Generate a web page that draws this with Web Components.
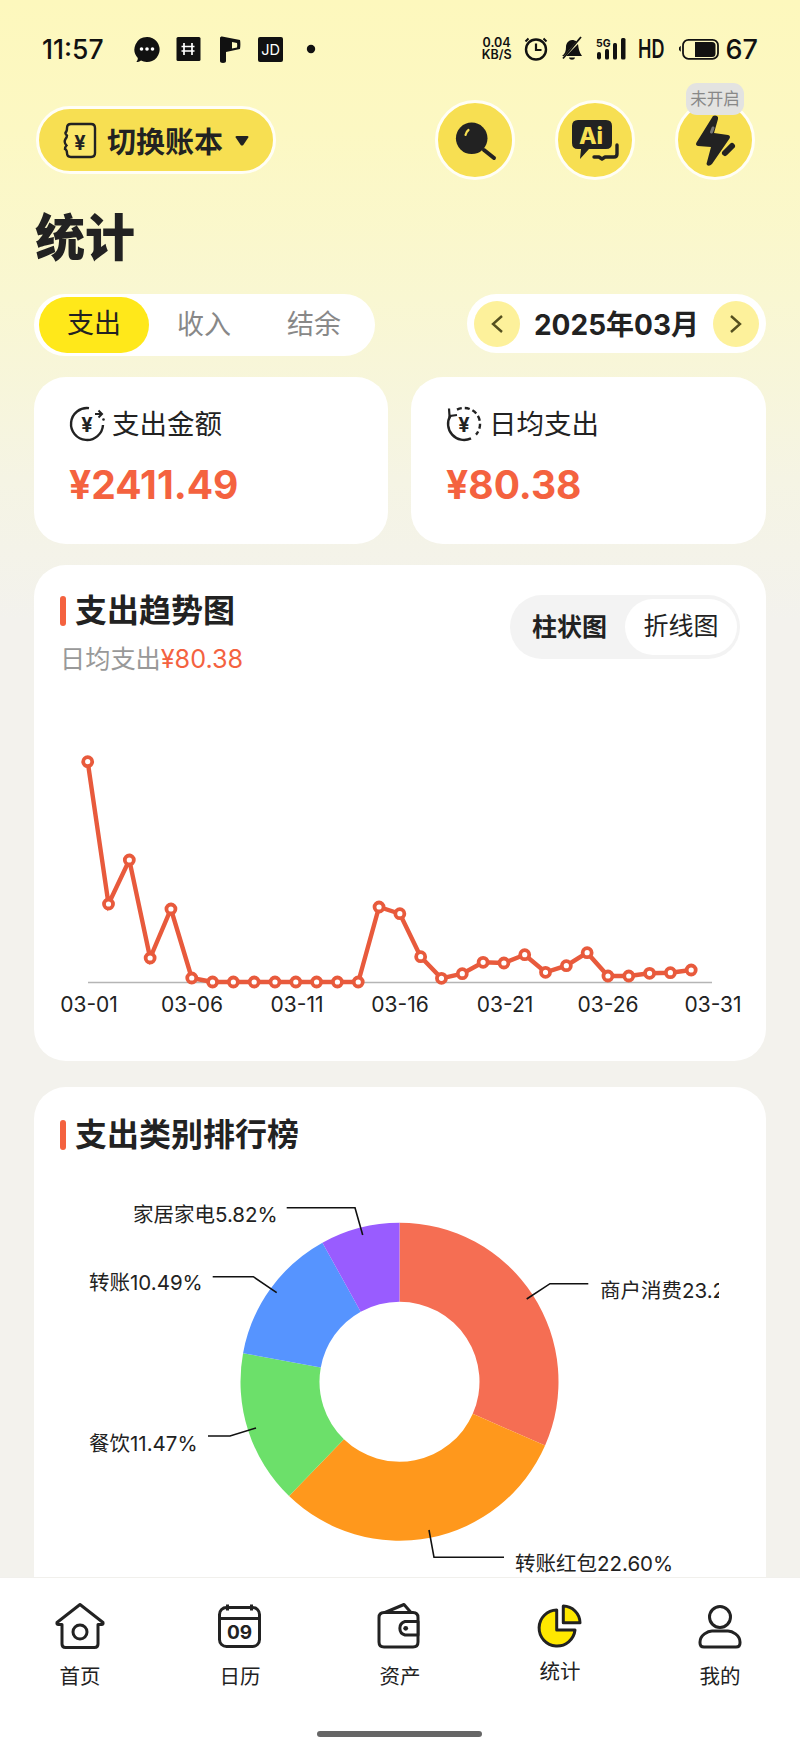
<!DOCTYPE html>
<html lang="zh">
<head>
<meta charset="utf-8">
<title>统计</title>
<style>
  html, body { margin: 0; padding: 0; }
  body {
    width: 800px;
    height: 1759px;
    overflow: hidden;
    font-family: Inter, "Noto Sans CJK SC", sans-serif;
    color: #222;
  }
</style>
</head>
<body>
<app-shell>
  <status-bar></status-bar>
  <top-actions></top-actions>
  <page-title>统计</page-title>
  <filter-row></filter-row>
  <stat-row>
    <stat-card icon="out" label="支出金额" value="¥2411.49"></stat-card>
    <stat-card icon="avg" label="日均支出" value="¥80.38"></stat-card>
  </stat-row>
  <trend-card></trend-card>
  <rank-card></rank-card>
  <tab-bar slot="nav"></tab-bar>
</app-shell>

<script>
const FONT = 'Inter, "Noto Sans CJK SC", sans-serif';

class AppShell extends HTMLElement {
    connectedCallback() {
        let shadow = this.attachShadow({ mode: 'open' });
        shadow.innerHTML = `
            <style>
                :host {
                    display: flex;
                    flex-direction: column;
                    width: 800px;
                    height: 1759px;
                    background: #f3f2ed;
                }
                .scroll {
                    flex: 1;
                    min-height: 0;
                    overflow: hidden;
                    background: linear-gradient(180deg, #fdf8bd 0, #fcf8c3 130px, #f9f7d2 300px, #f5f4e4 480px, #f3f2ed 620px);
                }
            </style>
            <div class="scroll"><slot></slot></div>
            <slot name="nav"></slot>
        `;
    }
}

class StatusBar extends HTMLElement {
    connectedCallback() {
        let shadow = this.attachShadow({ mode: 'open' });
        shadow.innerHTML = `
            <style>
                :host {
                    display: flex;
                    align-items: center;
                    height: 100px;
                    padding: 0 42px 2px 42px;
                    box-sizing: border-box;
                    color: #111;
                    font-family: ${FONT};
                }
                .time { font-size: 26.5px; font-weight: 500; width: 92px; }
                .num { font-size: 27px; font-weight: 500; margin-left: 6px; }
                svg { display: block; flex: none; }
                .speed { font-size: 12.5px; line-height: 12px; font-weight: 600; text-align: center; margin-left: auto; }
                .hd { font-size: 25px; font-weight: 600; transform: scaleX(.72); transform-origin: left; width: 28px; margin-left: 10px; margin-right: 12px; letter-spacing: 0; }
            </style>
            <span class="time">11:57</span>
            <svg width="190" height="30" viewBox="134 34 190 30">
                <path d="M147 37a12.5 12.5 0 1 1-6 23.4c-1.5 1.2-3 1.6-4.6 1.6 1-1.200 1.500-2.500 1.400-4A12.500 12.500 0 0 1 147 37z" fill="#111"/>
                <circle cx="141.500" cy="49" r="1.800" fill="#fff"/><circle cx="147" cy="49" r="1.800" fill="#fff"/><circle cx="152.500" cy="49" r="1.800" fill="#fff"/>
                <rect x="176.500" y="37" width="24" height="24" rx="1.500" fill="#111"/>
                <path d="M184 43v12M192 43v12M181.500 46.500h13M181.500 51h13" stroke="#fff" stroke-width="1.700" fill="none"/>
                <path d="M220 38c0-1 1-1.500 2-1.500l18 3.500c.5 2 .6 6 0 9l-14 3v9c0 1-1 2-3 2s-3-1-3-2z" fill="#111"/>
                <path d="M232 42l5 1c.3 1.500.3 3 0 4.500l-5 1z" fill="#fdf8c0"/>
                <rect x="258" y="37" width="25" height="25" rx="2" fill="#111"/>
                <text x="270.500" y="55" font-size="14.500" fill="#fff" text-anchor="middle" font-family="Inter, sans-serif">JD</text>
                <circle cx="311" cy="49" r="4.200" fill="#111"/>
            </svg>
            <span class="speed">0.04<br>KB/S</span>
            <svg style="margin-left:12px" width="24" height="26" viewBox="526 36 24 26">
                <circle cx="538" cy="49.500" r="10" fill="none" stroke="#111" stroke-width="2.400"/>
                <path d="M538 43.500v6.500h5.500" fill="none" stroke="#111" stroke-width="2.200"/>
                <path d="M527.500 41.500l3-3M548.500 41.500l-3-3" stroke="#111" stroke-width="2"/>
            </svg>
            <svg style="margin-left:13px" width="22" height="26" viewBox="563 36 22 26">
                <path d="M564 56c3-2 4-5 4-9 0-4 3-7 6-7 2 0 3 .5 4.500 1.500L566 56zM580 44c.5 4 1 8 4 12h-16z" fill="#111"/>
                <path d="M571 57.500c.5 3 5.500 3 6 0z" fill="#111"/>
                <path d="M565 58.500L583 37" stroke="#111" stroke-width="1.800"/>
            </svg>
            <svg style="margin-left:13px" width="32" height="24" viewBox="598 37 32 24">
                <text x="598" y="46.500" font-size="10.500" font-weight="700" fill="#111" font-family="Inter, sans-serif">5G</text>
                <rect x="599" y="52" width="4" height="7.500" rx="2" fill="#111"/>
                <rect x="607" y="49" width="4" height="10.500" rx="1.500" fill="#111"/>
                <rect x="615" y="43" width="4" height="16.500" rx="1.500" fill="#111"/>
                <rect x="623" y="38" width="4.500" height="21.500" rx="1.500" fill="#111"/>
            </svg>
            <span class="hd">HD</span>
            <svg width="42" height="24" viewBox="679 37 42 24">
                <rect x="684" y="39.800" width="35" height="19" rx="5.500" fill="none" stroke="#111" stroke-width="1.800"/>
                <path d="M696 42h17q3.500 0 3.500 3.500v8q0 3.500-3.500 3.500h-17z" fill="#111"/>
                <path d="M680 47.500l1.800-1.800v6l-1.800-1.800z" fill="#111"/>
            </svg>
            <span class="num">67</span>
        `;
    }
}

class TopActions extends HTMLElement {
    connectedCallback() {
        let shadow = this.attachShadow({ mode: 'open' });
        shadow.innerHTML = `
            <style>
                :host {
                    display: flex;
                    align-items: center;
                    height: 80px;
                    padding: 0 45px 0 36px;
                    font-family: ${FONT};
                    color: #222;
                }
                .switch {
                    display: flex;
                    align-items: center;
                    box-sizing: border-box;
                    width: 240px;
                    height: 68px;
                    padding-left: 22px;
                    border: 3px solid #fffef6;
                    border-radius: 34px;
                    background: #f7df52;
                    font-size: 29px;
                    font-weight: 700;
                    margin-right: auto;
                }
                .switch svg { margin-right: 10px; }
                .switch .caret { margin: 2px 0 0 12px; }
                .round {
                    position: relative;
                    box-sizing: border-box;
                    width: 80px;
                    height: 80px;
                    margin-left: 40px;
                    border: 3px solid #fffef6;
                    border-radius: 50%;
                    background: #f7df52;
                }
                .round svg { position: absolute; left: -3px; top: -3px; }
                .badge {
                    position: absolute;
                    left: 8px;
                    top: -20px;
                    width: 58px;
                    height: 32px;
                    border-radius: 11px;
                    background: #e3e3e1;
                    color: #888;
                    font-size: 16.500px;
                    line-height: 32px;
                    text-align: center;
                }
            </style>
            <div class="switch">
                <svg width="36" height="38" viewBox="61 121 36 38">
                    <path d="M71 124h20q4 0 4 4v25q0 4-4 4H71q-4 0-4-4 0-3-2-4 0-2 1.500-3.500-3-3.500-1-6.500 1.500-2 1.500-3.500-2-2-1.500-3 1.500-1 1.500-4.500 0-4 4-4z" fill="#fbe76a" stroke="#222" stroke-width="2.400"/>
                    <text x="80" y="150" font-size="20" font-weight="700" fill="#222" text-anchor="middle" font-family="Inter, sans-serif">¥</text>
                </svg>
                切换账本
                <svg class="caret" width="14" height="10" viewBox="0 0 14 10"><path d="M1.500 0h11q1.500 0 .8 1.500l-5 7.500q-1.300 1-2.600 0l-5-7.500Q0 0 1.500 0z" fill="#222"/></svg>
            </div>
            <div class="round">
                <svg width="80" height="80" viewBox="435 100 80 80">
                    <path d="M484 150l10 8" stroke="#222" stroke-width="4" stroke-linecap="round"/>
                    <circle cx="471.700" cy="138.300" r="15.800" fill="#222"/>
                    <path d="M465.500 135q.8-3.500 3-5" stroke="#f7df52" stroke-width="2.200" stroke-linecap="round" fill="none"/>
                </svg>
            </div>
            <div class="round">
                <svg width="80" height="80" viewBox="555 100 80 80">
                    <path d="M578 120h28q6 0 6 6v17q0 6-6 6h-17l-9 10 1-10h-3q-6 0-6-6v-17q0-6 6-6z" fill="#222"/>
                    <text x="591" y="144" font-size="23" font-weight="800" fill="#f7df52" text-anchor="middle" font-family="Inter, sans-serif">Ai</text>
                    <path d="M617 145v9q0 3-3 3h-9l-3 2-3-2h-5" fill="none" stroke="#222" stroke-width="3.400" stroke-linecap="round" stroke-linejoin="round"/>
                </svg>
            </div>
            <div class="round">
                <svg width="80" height="80" viewBox="675 100 80 80">
                    <path d="M713 116q2-1 4 0 1.500 1 1 3l-4 14 14 2q3 1 1.500 3.500L712 164q-3 3-5 1-1-1 0-3l4-15-13-1q-3-1-1.500-3.500z" fill="#222"/>
                    <path d="M711.500 132l1.500-4" stroke="#777" stroke-width="3" stroke-linecap="round"/>
                    <path d="M725 153l7-7" stroke="#222" stroke-width="6" stroke-linecap="round"/>
                </svg>
                <span class="badge">未开启</span>
            </div>
        `;
    }
}

class PageTitle extends HTMLElement {
    connectedCallback() {
        let shadow = this.attachShadow({ mode: 'open' });
        shadow.innerHTML = `
            <style>
                :host {
                    display: block;
                    margin: 33px 34px 0 35px;
                    height: 50px;
                    line-height: 50px;
                    font-size: 50px;
                    font-weight: 900;
                    font-family: ${FONT};
                    color: #222;
                }
            </style>
            <slot></slot>
        `;
    }
}

class FilterRow extends HTMLElement {
    connectedCallback() {
        let shadow = this.attachShadow({ mode: 'open' });
        shadow.innerHTML = `
            <style>
                :host {
                    display: flex;
                    justify-content: space-between;
                    margin: 31px 34px 0;
                    height: 62px;
                    font-family: ${FONT};
                }
                .tabs {
                    display: grid;
                    grid-template-columns: 110px 110px 110px;
                    align-items: center;
                    box-sizing: border-box;
                    width: 341px;
                    height: 62px;
                    padding: 3px 5px;
                    border-radius: 31px;
                    background: #fff;
                    font-size: 27px;
                    line-height: 54px;
                    color: #888;
                    text-align: center;
                }
                .tabs .on {
                    height: 56px;
                    border-radius: 28px;
                    background: #ffe81a;
                    color: #222;
                }
                .month {
                    display: flex;
                    align-items: center;
                    justify-content: space-between;
                    box-sizing: border-box;
                    width: 299px;
                    height: 59px;
                    padding: 0 7px;
                    border-radius: 30px;
                    background: #fff;
                    font-size: 28px;
                    font-weight: 700;
                    color: #222;
                }
                .month span:nth-child(2) { margin-top: -2px; }
                .arrow {
                    display: flex;
                    align-items: center;
                    justify-content: center;
                    width: 46px;
                    height: 46px;
                    border-radius: 50%;
                    background: #fdf19b;
                }
            </style>
            <div class="tabs"><span class="on">支出</span><span>收入</span><span>结余</span></div>
            <div class="month">
                <span class="arrow"><svg width="14" height="20" viewBox="0 0 14 20"><path d="M12 2L3 10l9 8" fill="none" stroke="#55501f" stroke-width="2.400"/></svg></span>
                <span>2025年03月</span>
                <span class="arrow"><svg width="14" height="20" viewBox="0 0 14 20"><path d="M2 2l9 8-9 8" fill="none" stroke="#55501f" stroke-width="2.400"/></svg></span>
            </div>
        `;
    }
}

class StatRow extends HTMLElement {
    connectedCallback() {
        let shadow = this.attachShadow({ mode: 'open' });
        shadow.innerHTML = `
            <style>
                :host {
                    display: grid;
                    grid-template-columns: 354px 355px;
                    gap: 23px;
                    margin: 21px 34px 0;
                }
            </style>
            <slot></slot>
        `;
    }
}

class StatCard extends HTMLElement {
    connectedCallback() {
        let shadow = this.attachShadow({ mode: 'open' });
        // las dos monedas solo cambian en el arco y la flecha
        let out = `
            <path d="M89 408.100A16 16 0 1 0 103 425" fill="none" stroke="#222" stroke-width="2.400"/>
            <path d="M95 414H102M98.500 410.500L102 414L98.500 417.500" fill="none" stroke="#222" stroke-width="2"/>
            <circle cx="103.500" cy="419.500" r="1.300" fill="#222"/>`;
        let avg = `
            <path d="M73.500 415.500A16 16 0 0 0 94 438.400" fill="none" stroke="#222" stroke-width="2.400"/>
            <path d="M80 409.600A16 16 0 0 1 99 434.600" fill="none" stroke="#222" stroke-width="2.400" stroke-dasharray="5 3"/>
            <path d="M72 408.500L72.500 416L80 415" fill="none" stroke="#222" stroke-width="2.200"/>`;
        shadow.innerHTML = `
            <style>
                :host {
                    display: block;
                    box-sizing: border-box;
                    height: 167px;
                    padding: 28px 0 0 35px;
                    border-radius: 32px;
                    background: #fff;
                    font-family: ${FONT};
                }
                .label { display: flex; align-items: center; height: 38px; font-size: 27.500px; color: #222; }
                .label svg { margin-right: 7px; }
                .label span { margin-top: -4px; }
                .value { margin-top: 18px; line-height: 48px; font-size: 39px; font-weight: 700; color: #f4623f; }
            </style>
            <div class="label">
                <svg width="36" height="38" viewBox="69 405 36 38">
                    ${this.getAttribute('icon') === 'out' ? out : avg}
                    <text x="87" y="431.500" font-size="20" font-weight="700" fill="#222" text-anchor="middle" font-family="Inter, sans-serif">¥</text>
                </svg>
                <span>${this.getAttribute('label')}</span>
            </div>
            <div class="value">${this.getAttribute('value')}</div>
        `;
    }
}

class TrendCard extends HTMLElement {
    connectedCallback() {
        let shadow = this.attachShadow({ mode: 'open' });
        let ys = [761.7, 904, 860, 958, 909, 978, 982, 982, 982, 982, 982, 982, 982, 982, 907, 913.7, 956.7, 978.3, 973.7, 962.3, 963, 954.7, 972.3, 965.7, 952.7, 976, 976, 973.3, 972.7, 970];
        let pts = ys.map((y, i) => [87.7 + i * 20.81, y]);
        let dots = pts.map(p => `<circle cx="${p[0]}" cy="${p[1]}" r="4.500" fill="#fff" stroke="#e85a3c" stroke-width="3.800"/>`).join('');
        let labels = [['03-01', 89], ['03-06', 192], ['03-11', 297], ['03-16', 400], ['03-21', 505], ['03-26', 608], ['03-31', 713]]
            .map(l => `<text x="${l[1]}" y="1012" font-size="21" fill="#222" text-anchor="middle" font-family="Inter, sans-serif">${l[0]}</text>`).join('');
        shadow.innerHTML = `
            <style>
                :host {
                    display: block;
                    box-sizing: border-box;
                    height: 496px;
                    margin: 21px 34px 0;
                    padding: 30px 26px 0;
                    border-radius: 32px;
                    background: #fff;
                    font-family: ${FONT};
                }
                .head { display: flex; justify-content: space-between; align-items: flex-start; height: 64px; }
                .title { position: relative; padding-left: 15px; line-height: 32px; font-size: 32px; font-weight: 700; color: #222; }
                .title::before { content: ""; position: absolute; left: 0; top: 1px; width: 6px; height: 30px; border-radius: 3px; background: #f4623f; }
                .sub { margin-top: 17px; line-height: 30px; font-size: 25.200px; color: #999; }
                .sub b { font-weight: 400; color: #f4623f; }
                .toggle {
                    display: flex;
                    align-items: center;
                    box-sizing: border-box;
                    width: 230px;
                    height: 64px;
                    padding: 0 3px 0 22px;
                    border-radius: 32px;
                    background: #f3f3f3;
                    font-size: 25px;
                    line-height: 54px;
                    color: #222;
                    justify-content: space-between;
                }
                .toggle b { font-weight: 700; }
                .toggle span {
                    display: block;
                    width: 112px;
                    height: 56px;
                    border-radius: 28px;
                    background: #fff;
                    text-align: center;
                }
                svg { display: block; margin: 2px 0 0 -26px; }
            </style>
            <div class="head">
                <div>
                    <div class="title">支出趋势图</div>
                    <div class="sub">日均支出<b>¥80.38</b></div>
                </div>
                <div class="toggle"><b>柱状图</b><span>折线图</span></div>
            </div>
            <svg width="732" height="400" viewBox="34 661 732 400">
                <line x1="88" y1="982.500" x2="712" y2="982.500" stroke="#b5b5b5" stroke-width="1.500"/>
                <polyline points="${pts.map(p => p.join(',')).join(' ')}" fill="none" stroke="#e85a3c" stroke-width="4.400"/>
                ${dots}
                ${labels}
            </svg>
        `;
    }
}

class RankCard extends HTMLElement {
    connectedCallback() {
        let shadow = this.attachShadow({ mode: 'open' });
        let slices = [[0, 113.7, '#f56e53'], [113.7, 224, '#ff981c'], [224, 280.3, '#6ce06a'], [280.3, 331, '#5694ff'], [331, 360, '#995cff']];
        let cx = 399.5, cy = 1381.7, R = 159, r = 80;
        let at = (a, rad) => {
            let t = a * Math.PI / 180;
            return (cx + rad * Math.sin(t)).toFixed(2) + ' ' + (cy - rad * Math.cos(t)).toFixed(2);
        };
        let paths = slices.map(s => {
            let big = s[1] - s[0] > 180 ? 1 : 0;
            return `<path fill="${s[2]}" d="M${at(s[0], R)}A${R} ${R} 0 ${big} 1 ${at(s[1], R)}L${at(s[1], r)}A${r} ${r} 0 ${big} 0 ${at(s[0], r)}Z"/>`;
        }).join('');
        let leaders = ['362.700,1235 355,1207.700 286.700,1207.700', '276.700,1292.700 253.300,1276.700 212.700,1276.700', '526.700,1299 550,1283.700 588.300,1283.700', '429,1530 434,1557.300 504,1557.300', '256,1428 230,1436 208,1436']
            .map(p => `<polyline points="${p}" fill="none" stroke="#111" stroke-width="1.600"/>`).join('');
        shadow.innerHTML = `
            <style>
                :host {
                    display: block;
                    box-sizing: border-box;
                    height: 560px;
                    margin: 26px 34px 0;
                    padding: 32px 26px 0;
                    border-radius: 32px;
                    background: #fff;
                    font-family: ${FONT};
                }
                .title { position: relative; padding-left: 15px; line-height: 32px; font-size: 32px; font-weight: 700; color: #222; }
                .title::before { content: ""; position: absolute; left: 0; top: 1px; width: 6px; height: 30px; border-radius: 3px; background: #f4623f; }
                svg { display: block; margin: 0 0 0 -26px; }
                text { font-size: 20.500px; fill: #222; dominant-baseline: central; }
            </style>
            <div class="title">支出类别排行榜</div>
            <svg width="732" height="440" viewBox="34 1151 732 440">
                <defs><clipPath id="edge"><rect x="34" y="1151" width="685" height="440"/></clipPath></defs>
                ${paths}
                ${leaders}
                <g clip-path="url(#edge)">
                    <text x="133" y="1214">家居家电5.82%</text>
                    <text x="89" y="1282">转账10.49%</text>
                    <text x="89" y="1443">餐饮11.47%</text>
                    <text x="600" y="1290">商户消费23.22%</text>
                    <text x="515" y="1563">转账红包22.60%</text>
                </g>
            </svg>
        `;
    }
}

class TabBar extends HTMLElement {
    connectedCallback() {
        let shadow = this.attachShadow({ mode: 'open' });
        shadow.innerHTML = `
            <style>
                :host {
                    position: relative;
                    display: grid;
                    grid-template-columns: repeat(5, 1fr);
                    box-sizing: border-box;
                    height: 182px;
                    padding: 24px 0 0 0;
                    border-top: 1px solid #f1f0ec;
                    background: #fff;
                    font-family: ${FONT};
                    font-size: 20.500px;
                    color: #222;
                }
                .item { display: flex; flex-direction: column; align-items: center; }
                .item svg { display: block; margin-bottom: 11px; }
                .item span { line-height: 28px; }
                .item.on span { margin-top: -5px; }
                .home {
                    position: absolute;
                    left: 317px;
                    top: 153px;
                    width: 165px;
                    height: 6px;
                    border-radius: 3px;
                    background: #666;
                }
            </style>
            <div class="item">
                <svg width="52" height="50" viewBox="54 1602 52 50" fill="none" stroke="#222" stroke-width="3" stroke-linejoin="round">
                    <path d="M80 1604.500L103 1622.500q.5 2-1.500 2H98V1644q0 3.500-3.500 3.500h-29Q62 1647.500 62 1644v-19.500h-3.500q-2 0-1.500-2z"/>
                    <circle cx="80" cy="1632" r="7"/>
                </svg>
                <span>首页</span>
            </div>
            <div class="item">
                <svg width="44" height="50" viewBox="218 1602 44 50" fill="none" stroke="#222" stroke-width="3">
                    <rect x="219.500" y="1607.500" width="40" height="39" rx="7"/>
                    <path d="M219.500 1618.500h40M227.500 1604.500v6M251.500 1604.500v6"/>
                    <text x="239.500" y="1639" font-size="19" font-weight="700" fill="#222" stroke="none" text-anchor="middle" font-family="Inter, sans-serif">09</text>
                </svg>
                <span>日历</span>
            </div>
            <div class="item">
                <svg width="46" height="50" viewBox="377 1602 46 50" fill="none" stroke="#222" stroke-width="3" stroke-linejoin="round">
                    <path d="M384 1612.500h29q5 0 5 5V1642q0 5-5 5H384q-5 0-5-5v-24.500q0-5 5-5z"/>
                    <path d="M385 1612.500L404 1604.500l7 8"/>
                    <path d="M418 1621.500h-13a7 7 0 0 0 0 13.500h13z" fill="#fff"/>
                    <circle cx="405.700" cy="1628.300" r="2.400" fill="#222" stroke="none"/>
                </svg>
                <span>资产</span>
            </div>
            <div class="item on">
                <svg width="46" height="50" viewBox="537 1602 46 50" fill="#ffe800" stroke="#222" stroke-width="3" stroke-linejoin="round">
                    <path d="M556.700 1610A18 18 0 1 0 575 1630H556.700z"/>
                    <path d="M563.300 1606A17 17 0 0 1 580 1622.700H563.300z"/>
                </svg>
                <span>统计</span>
            </div>
            <div class="item">
                <svg width="46" height="50" viewBox="697 1602 46 50" fill="none" stroke="#222" stroke-width="3">
                    <circle cx="720" cy="1617" r="10.500"/>
                    <path d="M700 1642C700 1635 708 1631 712 1631H728C732 1631 740 1635 740 1642V1643Q740 1647 736 1647H704Q700 1647 700 1643Z"/>
                </svg>
                <span>我的</span>
            </div>
            <div class="home"></div>
        `;
    }
}

window.customElements.define('app-shell', AppShell);
window.customElements.define('status-bar', StatusBar);
window.customElements.define('top-actions', TopActions);
window.customElements.define('page-title', PageTitle);
window.customElements.define('filter-row', FilterRow);
window.customElements.define('stat-row', StatRow);
window.customElements.define('stat-card', StatCard);
window.customElements.define('trend-card', TrendCard);
window.customElements.define('rank-card', RankCard);
window.customElements.define('tab-bar', TabBar);
</script>
</body>
</html>
